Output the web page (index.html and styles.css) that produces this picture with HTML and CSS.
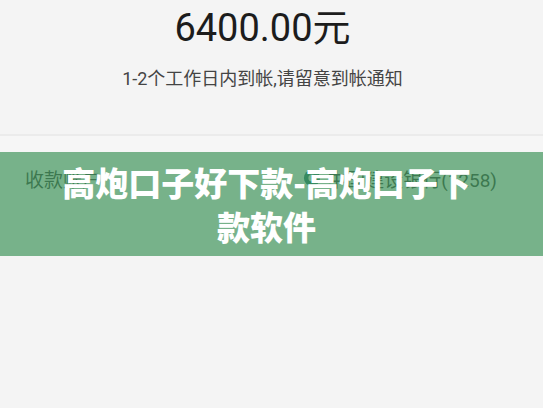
FILE: index.html
```html
<!DOCTYPE html>
<html lang="zh-CN">
<head>
<meta charset="utf-8">
<link rel="stylesheet" href="styles.css">
</head>
<body>
<div class="page">
  <section class="summary">
    <div class="amount">6400.00元</div>
    <div class="note">1-2个工作日内到帐,请留意到帐通知</div>
  </section>
  <section class="list">
    <div class="row">
      <span class="label">收款账户</span>
      <span class="bank">
        <svg class="bank-icon" viewBox="0 0 20 20" width="18" height="18"><circle cx="10" cy="10" r="9" fill="#1f6f6a"/><circle cx="10" cy="10" r="4" fill="#f4f4f4"/></svg>
        <span>中国建设银行(1258)</span>
      </span>
    </div>
  </section>
  <div class="banner">
    <h1 class="banner-title">高炮口子好下款-高炮口子下款软件</h1>
  </div>
</div>
</body>
</html>
```
FILE: styles.css
```css
html, body {
  margin: 0;
  padding: 0;
  background: #f4f4f4;
}
.page {
  position: relative;
  width: 543px;
  height: 408px;
  overflow: hidden;
  font-family: Roboto, "Noto Sans CJK SC", sans-serif;
  color: #222;
}
.summary {
  display: flex;
  flex-direction: column;
  align-items: center;
  height: 136px;
  padding-right: 18px;
  border-bottom: 2px solid #ebebeb;
  box-sizing: border-box;
}
.amount {
  font-size: 38px;
  line-height: 44px;
  margin-top: 6px;
  color: #1c1c1c;
}
.note {
  font-size: 18px;
  line-height: 24px;
  margin-top: 17px;
  color: #444;
}
.list {
  background: #f6f6f6;
}
.row {
  display: flex;
  align-items: center;
  justify-content: space-between;
  height: 84px;
  padding: 0 46px 0 25px;
  font-size: 19px;
  color: #333;
}
.bank {
  display: flex;
  align-items: center;
  gap: 6px;
}
.banner {
  position: absolute;
  left: 0;
  top: 152px;
  width: 543px;
  height: 104px;
  background: rgba(65, 150, 93, 0.7);
  display: flex;
  align-items: center;
  justify-content: center;
  padding: 0 66px 0 56px;
  box-sizing: border-box;
}
.banner-title {
  margin: 0;
  font-family: "Noto Sans CJK SC", sans-serif;
  font-weight: 900;
  font-size: 33px;
  line-height: 44px;
  color: #fff;
  text-align: center;
}
```
